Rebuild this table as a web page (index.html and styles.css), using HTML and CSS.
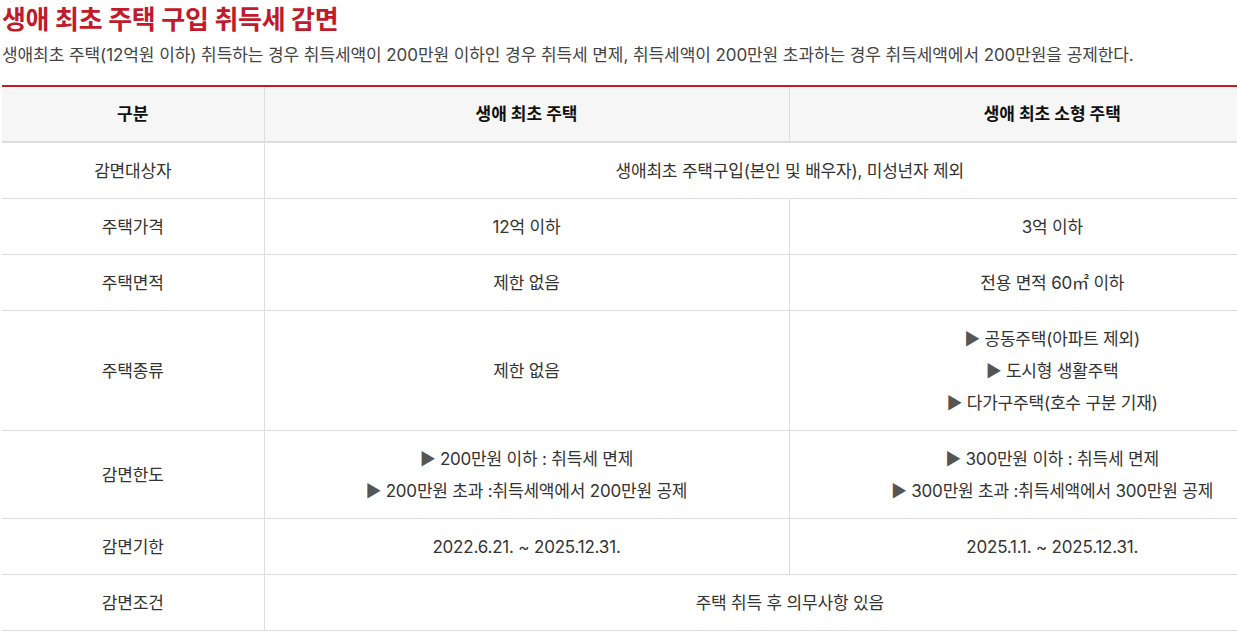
FILE: index.html
```html
<!DOCTYPE html>
<html lang="ko">
<head>
<meta charset="utf-8">
<link rel="stylesheet" href="styles.css">
</head>
<body>
<div class="page">
  <h2 class="title">생애 최초 주택 구입 취득세 감면</h2>
  <p class="desc">생애최초 주택(12억원 이하) 취득하는 경우 취득세액이 200만원 이하인 경우 취득세 면제, 취득세액이 200만원 초과하는 경우 취득세액에서 200만원을 공제한다.</p>
  <div class="table-wrap">
  <table class="tbl">
    <colgroup>
      <col class="c1">
      <col class="c2">
      <col class="c3">
    </colgroup>
    <thead>
      <tr>
        <th>구분</th>
        <th>생애 최초 주택</th>
        <th>생애 최초 소형 주택</th>
      </tr>
    </thead>
    <tbody>
      <tr>
        <td>감면대상자</td>
        <td colspan="2">생애최초 주택구입(본인 및 배우자), 미성년자 제외</td>
      </tr>
      <tr>
        <td>주택가격</td>
        <td>12억 이하</td>
        <td>3억 이하</td>
      </tr>
      <tr>
        <td>주택면적</td>
        <td>제한 없음</td>
        <td>전용 면적 60㎡ 이하</td>
      </tr>
      <tr>
        <td>주택종류</td>
        <td>제한 없음</td>
        <td><span class="tri">▶</span> 공동주택(아파트 제외)<br><span class="tri">▶</span> 도시형 생활주택<br><span class="tri">▶</span> 다가구주택(호수 구분 기재)</td>
      </tr>
      <tr>
        <td>감면한도</td>
        <td><span class="tri">▶</span> 200만원 이하 : 취득세 면제<br><span class="tri">▶</span> 200만원 초과 :취득세액에서 200만원 공제</td>
        <td><span class="tri">▶</span> 300만원 이하 : 취득세 면제<br><span class="tri">▶</span> 300만원 초과 :취득세액에서 300만원 공제</td>
      </tr>
      <tr>
        <td>감면기한</td>
        <td>2022.6.21. ~ 2025.12.31.</td>
        <td>2025.1.1. ~ 2025.12.31.</td>
      </tr>
      <tr>
        <td>감면조건</td>
        <td colspan="2">주택 취득 후 의무사항 있음</td>
      </tr>
    </tbody>
  </table>
  </div>
</div>
</body>
</html>
```

FILE: styles.css
```css
html, body {
  margin: 0;
  padding: 0;
  background: #fff;
}
body {
  font-family: Inter, "Noto Sans CJK KR", sans-serif;
  color: #333;
}
.page {
  padding: 0 0 0 2px;
}
.title {
  margin: 0;
  font-size: 26px;
  line-height: 40px;
  font-weight: 700;
  color: #c01a2c;
  letter-spacing: -0.3px;
}
.desc {
  margin: 2px 0 17px;
  font-size: 17px;
  line-height: 26px;
  color: #444;
  letter-spacing: -0.08px;
}
.table-wrap {
  overflow: hidden;
}
.tbl {
  width: 1313px;
  border-collapse: collapse;
  table-layout: fixed;
  border-top: 2px solid #c01a2c;
  font-size: 17px;
}
.c1 { width: 262px; }
.c2 { width: 525px; }
.tbl th {
  background: #f6f6f6;
  color: #111;
  font-weight: 700;
  height: 54px;
  padding: 0;
  border-bottom: 2px solid #ddd;
  border-left: 1px solid #ddd;
  line-height: 32px;
}
.tbl td {
  text-align: center;
  padding: 12px 0 11px;
  line-height: 32px;
  border-bottom: 1px solid #ddd;
  border-left: 1px solid #ddd;
  color: #333;
  letter-spacing: -0.2px;
}
.tri {
  color: #555;
}
.tbl th:first-child,
.tbl td:first-child {
  border-left: none;
}
```
